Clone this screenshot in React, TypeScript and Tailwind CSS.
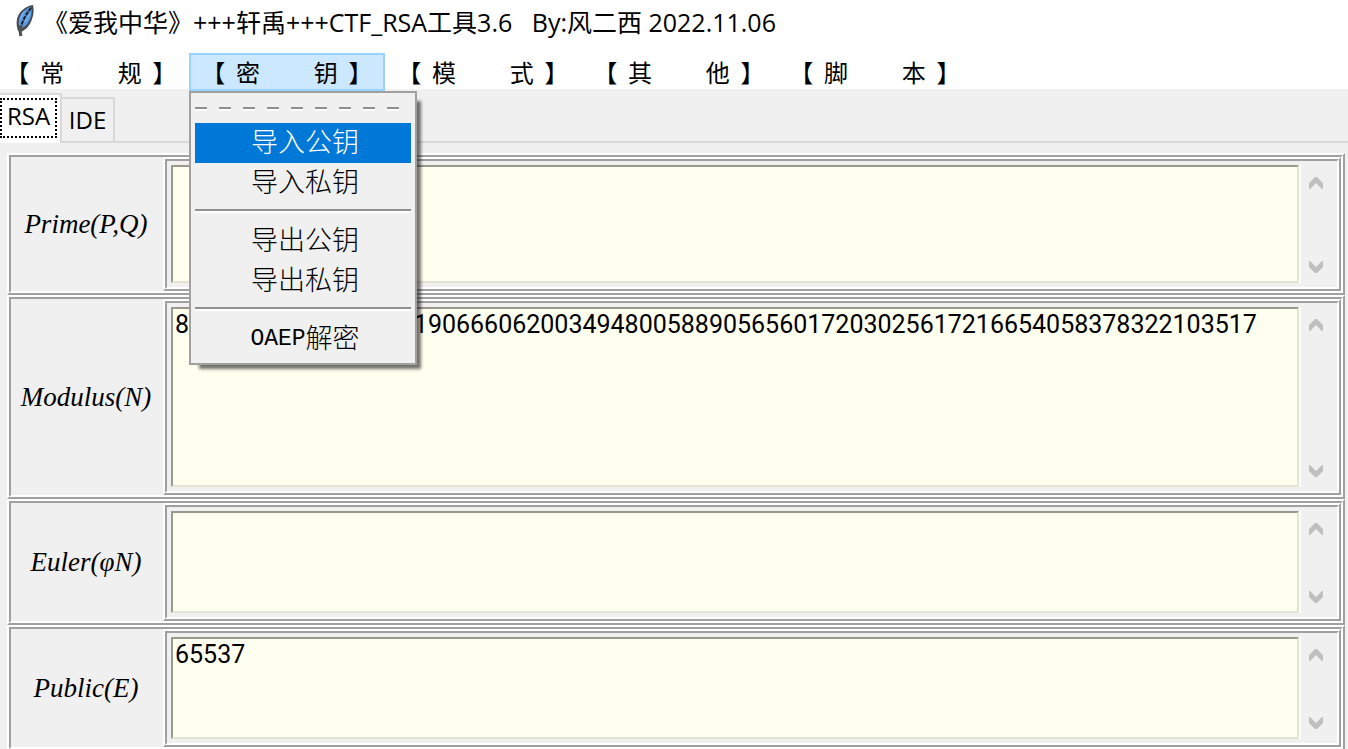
import { useState, type ReactNode } from 'react';

type MenuEntry = { id: string; latin?: string; text: string } | null;

const menus = [
  ['常', '规'],
  ['密', '钥'],
  ['模', '式'],
  ['其', '他'],
  ['脚', '本'],
];

// null is a separator
const keyMenu: MenuEntry[] = [
  { id: 'import-public', text: '导入公钥' },
  { id: 'import-private', text: '导入私钥' },
  null,
  { id: 'export-public', text: '导出公钥' },
  { id: 'export-private', text: '导出私钥' },
  null,
  { id: 'oaep', latin: 'OAEP', text: '解密' },
];

const fields = [
  { id: 'prime', label: 'Prime(P,Q)', height: 'h-[118px]', value: '' },
  {
    id: 'modulus',
    label: 'Modulus(N)',
    height: 'h-[180px]',
    value: '81176460328195047190666062003494800588905656017203025617216654058378322103517',
  },
  { id: 'euler', label: 'Euler(φN)', height: 'h-[102px]', value: '' },
  { id: 'public', label: 'Public(E)', height: 'h-[102px]', value: '65537' },
];

function FeatherIcon() {
  return (
    <svg width="20" height="34" viewBox="0 0 20 34" aria-hidden="true">
      <path d="M18 1C11 2 4 7 2 15c-1 5 0 8 1 12l3 1c6-3 9-7 11-13 2-5 2-10 1-14z" fill="#454b52" />
      <path d="M16 3C10 5 5 9 4 16c-1 4 0 6 1 9 5-2 8-5 10-10 2-4 2-8 1-12z" fill="#5c9ade" />
      <path d="M16 4C12 9 8 15 6 23" stroke="#16222e" strokeWidth="2" strokeDasharray="4 1" fill="none" />
      <path d="M9 8l-4 8M15 10l-5 8" stroke="#8dbcf0" strokeWidth="1" fill="none" />
      <path d="M6 21c-1 4-1 8 0 11" stroke="#505050" strokeWidth="3" fill="none" />
    </svg>
  );
}

function Ridge({ className = '', children }: { className?: string; children: ReactNode }) {
  return (
    <div className={`border-2 border-t-white border-l-white border-r-[#a0a0a0] border-b-[#a0a0a0] ${className}`}>
      <div className="flex h-full border-2 border-t-[#a0a0a0] border-l-[#a0a0a0] border-r-white border-b-white">
        {children}
      </div>
    </div>
  );
}

function Arrow({ down = false }: { down?: boolean }) {
  return (
    <svg width="14" height="12" viewBox="0 0 14 12" fill="#bfbfbf" aria-hidden="true">
      {down ? <path d="M0 0v6l6 6h2l6-6V0h-1L7 6 1 0z" /> : <path d="M0 12V6l6-6h2l6 6v6h-1L7 6l-6 6z" />}
    </svg>
  );
}

function Field({ id, label, height, value }: (typeof fields)[number]) {
  return (
    <Ridge>
      <label
        htmlFor={id}
        className="flex w-[152px] shrink-0 items-center justify-center pt-0.5 pr-0.5 font-['Liberation_Serif',serif] text-[27px] text-black italic"
      >
        {label}
      </label>
      <Ridge className="min-w-0 flex-1">
        <div className="flex w-full py-1 pl-1">
          <div className="min-w-0 flex-1 border-r-2 border-white">
            <textarea
              id={id}
              defaultValue={value}
              spellCheck={false}
              className={`block w-full resize-none overflow-hidden border-2 border-t-[#999990] border-l-[#999990] border-r-[#e4e4d4] border-b-[#e4e4d4] bg-[#fffff0] px-0.5 font-[Roboto,sans-serif] text-[25px] leading-8 text-black outline-none ${height}`}
            />
          </div>
          <div className="mr-1.5 flex w-[30px] flex-col justify-between">
            <button type="button" aria-label="Scroll up" className="flex h-9 items-center justify-center">
              <Arrow />
            </button>
            <button type="button" aria-label="Scroll down" className="flex h-8 items-center justify-center">
              <Arrow down />
            </button>
          </div>
        </div>
      </Ridge>
    </Ridge>
  );
}

function Separator() {
  return (
    <div className="h-[18px] pt-1.5">
      <div className="h-1 border-t-2 border-b-2 border-t-[#909090] border-b-white" />
    </div>
  );
}

function KeyMenu() {
  const [active, setActive] = useState('import-public');

  return (
    <div className="absolute top-[38px] left-0 z-20 w-[228px] border-2 border-[#a0a0a0] bg-[#f0f0f0] p-1 shadow-[7px_7px_3px_-3px_rgba(0,0,0,0.55)]">
      {/* tear-off line */}
      <div className="flex h-[26px] gap-3 pt-2.5">
        {Array.from({ length: 9 }, (_, i) => (
          <div key={i} className="h-1 w-3 shrink-0 border-t-2 border-b-2 border-t-[#909090] border-b-white" />
        ))}
      </div>
      {keyMenu.map((entry, i) =>
        entry ? (
          <button
            key={entry.id}
            type="button"
            onMouseEnter={() => setActive(entry.id)}
            className={`flex h-10 w-full items-start justify-center pl-1 font-['Noto_Sans_CJK_SC',sans-serif] text-[27px] leading-9 font-light ${
              active === entry.id ? 'bg-[#0078d7] text-white' : 'text-black'
            }`}
          >
            {entry.latin && (
              <span className="font-['Liberation_Mono',monospace] text-[23px] leading-10 font-normal">
                {entry.latin}
              </span>
            )}
            {entry.text}
          </button>
        ) : (
          <Separator key={i} />
        ),
      )}
    </div>
  );
}

export default function App() {
  return (
    <div className="h-screen overflow-hidden bg-[#f0f0f0] font-['Open_Sans','Noto_Sans_CJK_SC',sans-serif] text-2xl text-black">
      <header className="flex h-[53px] bg-white pl-[15px]">
        <div className="pt-1">
          <FeatherIcon />
        </div>
        <h1 className="ml-2 h-11 text-[25px] leading-[44px] whitespace-pre">
          《爱我中华》+++轩禹+++CTF_RSA工具3.6{'   '}By:风二西 2022.11.06
        </h1>
      </header>

      <nav className="h-9 bg-white">
        <div className="-ml-[7px] flex">
          {menus.map(([first, last], i) => (
            <div key={first} className="relative h-9 w-[196px] shrink-0">
              <button
                type="button"
                className={`relative flex h-[38px] w-full items-center justify-center border-2 font-['Noto_Sans_CJK_SC',sans-serif] leading-8 whitespace-pre ${
                  i === 1 ? 'z-10 border-[#99d1ff] bg-[#cce8ff]' : 'border-transparent'
                }`}
              >
                {`【  ${first}          ${last}  】`}
              </button>
              {i === 1 && <KeyMenu />}
            </div>
          ))}
        </div>
      </nav>

      <div className="flex h-[54px] pt-1" role="tablist">
        <button
          type="button"
          role="tab"
          aria-selected="true"
          className="flex h-[50px] w-[62px] items-start border-t-2 border-r-2 border-[#d9d9d9] bg-white pt-[3px] pr-[3px]"
        >
          <span className="flex h-10 w-full items-center justify-center border-2 border-dotted border-black pb-1 leading-8">
            RSA
          </span>
        </button>
        <div className="flex flex-1 items-end border-b-2 border-[#d9d9d9]">
          <button
            type="button"
            role="tab"
            aria-selected="false"
            className="h-[44px] w-[53px] border-t-2 border-r-2 border-[#d9d9d9] leading-10"
          >
            IDE
          </button>
        </div>
      </div>

      <main className="pt-2.5 pr-[3px] pl-[7px]">
        {fields.map((field) => (
          <Field key={field.id} {...field} />
        ))}
      </main>
    </div>
  );
}
